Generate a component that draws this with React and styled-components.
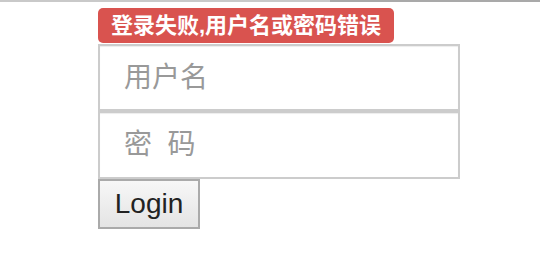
import React from 'react'
import styled, { createGlobalStyle } from 'styled-components'

const GlobalStyle = createGlobalStyle`
  html, body {
    margin: 0;
    padding: 0;
    background: #fff;
  }
  body {
    font-family: "Liberation Sans", "Noto Sans CJK SC", sans-serif;
  }
`

const TopEdge = styled.div`
  display: flex;
  height: 2px;
`
const EdgePart = styled.div`
  flex: ${props => props.grow};
  background: ${props => props.color};
`

const Page = styled.div`
  padding: 6px 0 0 98px;
`
const Form = styled.form`
  display: flex;
  flex-direction: column;
  align-items: flex-start;
  width: 362px;
`
const ErrorLabel = styled.span`
  display: inline-block;
  height: 35px;
  line-height: 35px;
  padding: 0 13px;
  margin-bottom: 1px;
  border-radius: 5px;
  background: #d9534f;
  color: #fff;
  font-size: 22px;
  font-weight: bold;
  white-space: nowrap;
`
const Field = styled.input`
  box-sizing: border-box;
  width: 100%;
  height: ${props => props.h}px;
  margin: 0;
  padding: 0 0 0 24px;
  border: 2px solid #ccc;
  border-radius: 0;
  box-shadow: inset 0 1px 1px rgba(0, 0, 0, 0.075);
  outline: none;
  font-family: "Liberation Sans", "Noto Sans CJK SC", sans-serif;
  font-size: 28px;
  color: #333;
  &::placeholder {
    color: #999;
    white-space: pre;
  }
`
const LoginButton = styled.button`
  box-sizing: border-box;
  width: 102px;
  height: 50px;
  margin: 0;
  padding: 0;
  border: 2px solid #aaa;
  border-radius: 0;
  background: linear-gradient(#f7f7f7, #e4e4e4);
  color: #222;
  font-family: "Liberation Sans", sans-serif;
  font-size: 28px;
`

export default function App() {
  return (
    <>
      <GlobalStyle />
      <TopEdge>
        <EdgePart grow="330" color="#c9c9c9" />
        <EdgePart grow="210" color="#a9a9a9" />
      </TopEdge>
      <Page>
        <Form onSubmit={e => e.preventDefault()}>
          <ErrorLabel>登录失败,用户名或密码错误</ErrorLabel>
          <Field type="text" placeholder="用户名" h={67} />
          <Field type="password" placeholder="密  码" h={68} />
          <LoginButton type="submit">Login</LoginButton>
        </Form>
      </Page>
    </>
  )
}
